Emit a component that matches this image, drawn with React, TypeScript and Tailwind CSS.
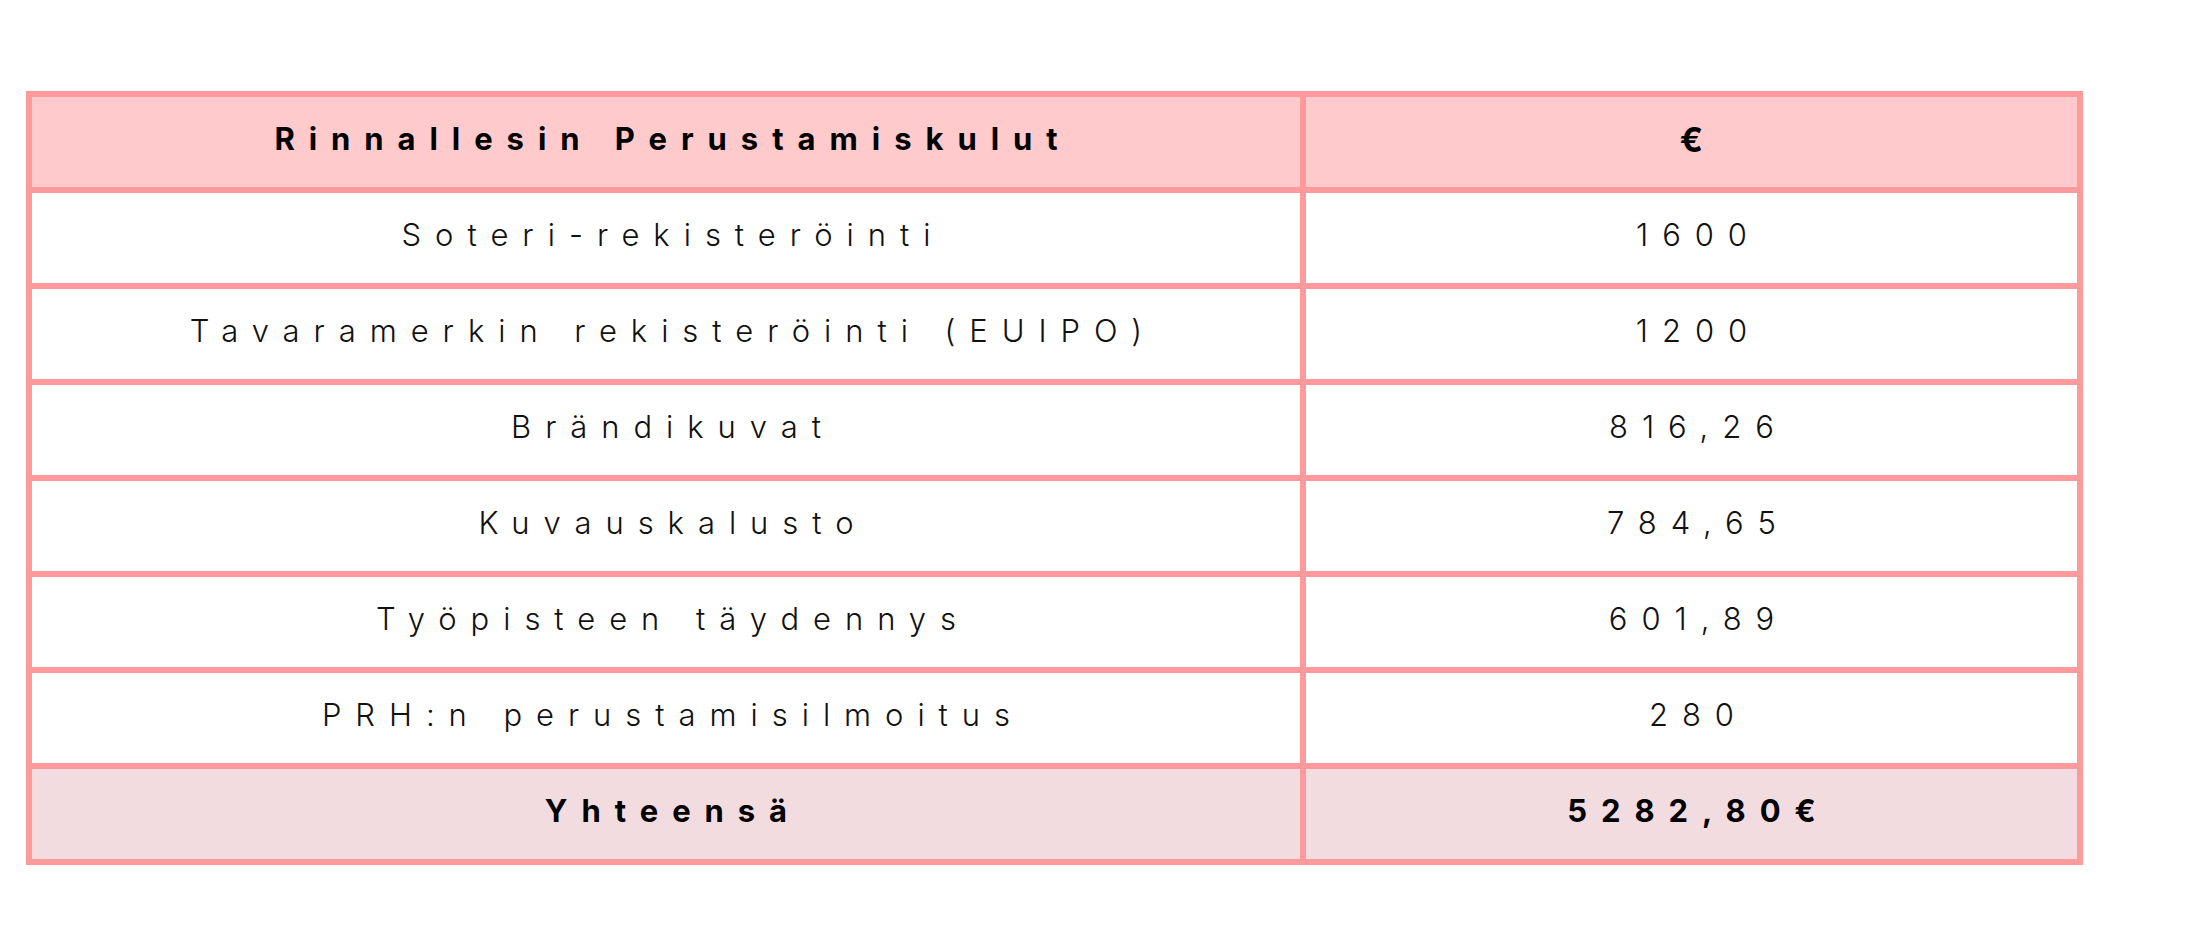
const rows: [string, string][] = [
  ["Soteri-rekisteröinti", "1600"],
  ["Tavaramerkin rekisteröinti (EUIPO)", "1200"],
  ["Brändikuvat", "816,26"],
  ["Kuvauskalusto", "784,65"],
  ["Työpisteen täydennys", "601,89"],
  ["PRH:n perustamisilmoitus", "280"],
];

const font = { fontFamily: "Inter, 'Noto Sans', sans-serif" };

const cell = "h-[90px] flex items-center justify-center pb-[6px] pl-[0.45em] text-[31px] tracking-[0.45em]";

export default function App() {
  return (
    <div className="w-[2190px] h-[936px] bg-white pt-[91px] pl-[26px]" style={font}>
      <div className="grid grid-cols-[1268px_771px] gap-[6px] bg-[#fe9a9b] p-[6px] w-fit">
        <div className={`${cell} bg-[#ffcacb] font-bold text-black`}>Rinnallesin Perustamiskulut</div>
        <div className={`${cell} bg-[#ffcacb] font-bold text-black text-[34px]`}>€</div>

        {rows.map(([label, value]) => (
          <div key={label} className="contents">
            <div className={`${cell} bg-white font-light text-[#111]`}>{label}</div>
            <div className={`${cell} bg-white font-light text-[#111]`}>{value}</div>
          </div>
        ))}

        <div className={`${cell} bg-[#f3dcdf] font-bold text-black`}>Yhteensä</div>
        <div className={`${cell} bg-[#f3dcdf] font-bold text-black`}>5282,80€</div>
      </div>
    </div>
  );
}
